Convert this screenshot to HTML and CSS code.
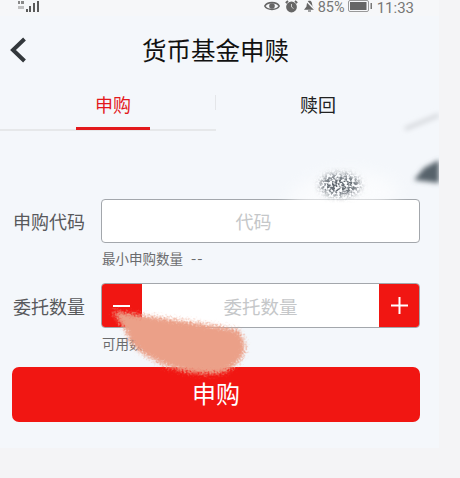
FILE: index.html
```html
<!DOCTYPE html>
<html lang="zh">
<head>
<meta charset="utf-8">
<title>货币基金申赎</title>
<link rel="stylesheet" href="styles.css">
</head>
<body>
<div class="app">
  <div class="status">
    <svg class="signal" width="22" height="12" viewBox="0 0 22 12">
      <g fill="#888"><rect x="0" y="1" width="2" height="3"/><rect x="3" y="1" width="3" height="3"/><rect x="0" y="6" width="6" height="3" opacity=".5"/></g>
      <g fill="#5a5a5a"><rect x="8" y="9" width="2" height="3"/><rect x="11" y="6" width="2" height="6"/><rect x="15" y="3" width="2" height="9"/><rect x="19" y="1" width="2" height="11"/></g>
    </svg>
    <div class="status-right">
      <svg width="16" height="12" viewBox="0 0 16 12"><path d="M0.800 6C3 1.500 13 1.500 15.200 6C13 10.500 3 10.500 0.800 6Z" fill="none" stroke="#666" stroke-width="1.600"/><circle cx="8" cy="6" r="2.800" fill="#666"/></svg>
      <svg class="ic-alarm" width="13" height="13" viewBox="0 0 13 13"><circle cx="6.500" cy="7" r="5.400" fill="#666"/><path d="M.8 3L3 1M12.200 3L10 1" stroke="#666" stroke-width="1.800"/><path d="M6.500 4V7L8.500 8.500" stroke="#ccc" fill="none"/></svg>
      <svg class="ic-bell" width="13" height="12" viewBox="0 0 13 12"><path d="M6.500 .8C4 .8 4 3.500 3.500 6.500L1 9.800H12L9.500 6.500C9 3.500 9 .8 6.500 .8Z" fill="#666"/><path d="M5 11H8" stroke="#666" stroke-width="1.200"/><path d="M2.500 0L12.500 10.500" stroke="#f6f7f9" stroke-width="1.500"/></svg>
      <span class="pct">85%</span>
      <svg class="ic-batt" width="25" height="12" viewBox="0 0 25 12"><rect x=".5" y=".5" width="20" height="11" rx="1.500" fill="none" stroke="#999"/><rect x="2" y="2" width="16.500" height="8" fill="#666"/><rect x="22.500" y="3" width="1.500" height="6" fill="#777"/></svg>
      <span class="time">11:33</span>
    </div>
  </div>

  <header class="title-bar">
    <svg class="back" width="18" height="26" viewBox="0 0 18 26"><path d="M15.500 2L4 13L15.500 24" fill="none" stroke="#33383c" stroke-width="4"/></svg>
    <h1 class="title">货币基金申赎</h1>
  </header>

  <nav class="tabs">
    <div class="tab active"><span>申购</span></div>
    <div class="tab tab-redeem"><span>赎回</span></div>
  </nav>

  <main class="form">
    <div class="row">
      <label class="label">申购代码</label>
      <div class="field field-code"><span class="placeholder">代码</span></div>
    </div>
    <p class="hint">最小申购数量<span class="dash">--</span></p>
    <div class="row row-qty">
      <label class="label">委托数量</label>
      <div class="field stepper">
        <span class="step"><svg width="17" height="2" viewBox="0 0 17 2"><rect width="17" height="2" fill="#fff"/></svg></span>
        <span class="placeholder">委托数量</span>
        <span class="step"><svg width="17" height="17" viewBox="0 0 17 17"><path d="M0 8.500H17M8.500 0V17" stroke="#fff" stroke-width="2"/></svg></span>
      </div>
    </div>
    <p class="hint hint-avail">可用数量</p>
    <button class="submit">申购</button>
  </main>

  <svg class="smudge" width="439" height="448" viewBox="0 0 439 448">
    <defs>
      <filter id="glow" x="-30%" y="-30%" width="160%" height="160%"><feGaussianBlur stdDeviation="8"/></filter>
      <filter id="soft" x="-30%" y="-60%" width="160%" height="220%"><feGaussianBlur stdDeviation="2.500"/></filter>
      <filter id="ink" x="-30%" y="-30%" width="160%" height="160%">
        <feGaussianBlur in="SourceGraphic" stdDeviation="3.500" result="s"/>
        <feTurbulence type="fractalNoise" baseFrequency=".4" numOctaves="2" seed="4" result="n"/>
        <feColorMatrix in="n" type="matrix" values="0 0 0 0 0  0 0 0 0 0  0 0 0 0 0  0 0 0 4 -1.500" result="m"/>
        <feComposite in="s" in2="m" operator="in"/>
        <feGaussianBlur stdDeviation=".6"/>
      </filter>
      <filter id="paint" x="-15%" y="-15%" width="130%" height="130%">
        <feGaussianBlur in="SourceGraphic" stdDeviation="2" result="s"/>
        <feTurbulence type="fractalNoise" baseFrequency=".5" numOctaves="3" seed="9" result="n"/>
        <feDisplacementMap in="s" in2="n" scale="9" xChannelSelector="R" yChannelSelector="G"/>
        <feGaussianBlur stdDeviation=".5"/>
      </filter>
    </defs>
    <path d="M285 205C300 165 380 160 400 190C395 215 330 225 285 205Z" fill="#fff" opacity=".6" filter="url(#glow)"/>
    <ellipse cx="340" cy="185" rx="20" ry="11" fill="#646b72" filter="url(#ink)"/>
    <path d="M439 160L424 168L414 180L439 183Z" fill="#56626b" filter="url(#soft)"/>
    <path d="M439 115L405 129" stroke="#d3d6da" stroke-width="4" filter="url(#soft)"/>
    <path d="M113 311C140 316 190 320 238 330C250 345 247 360 225 372C200 377 170 370 150 358C135 350 128 340 125 330C120 323 116 317 113 311Z" fill="#eba088" filter="url(#paint)"/>
  </svg>
</div>
</body>
</html>
```
FILE: styles.css
```css
* { box-sizing: border-box; }
html, body { margin: 0; height: 100%; }
body {
  background: #f4f4f6;
  font-family: "Noto Sans CJK SC", "Liberation Sans", sans-serif;
  overflow: hidden;
}
.app {
  position: relative;
  width: 439px;
  height: 448px;
  background: #f4f7fb;
}
.status {
  height: 16px;
  display: flex;
  justify-content: space-between;
  align-items: center;
  padding: 0 25px 0 18px;
  background: #f6f7f9;
}
.status svg { margin-bottom: 4px; }
.signal { display: block; }
.status-right {
  display: flex;
  align-items: center;
  color: #777;
  font-family: Roboto, "Liberation Sans", sans-serif;
  font-size: 14.500px;
  line-height: 16px;
}
.ic-alarm { margin-left: 5px; }
.ic-bell { margin-left: 5px; }
.pct { margin-left: 2px; }
.ic-batt { margin-left: 3px; }
.time { margin-left: 4px; font-size: 15px; }
.title-bar {
  position: relative;
  height: 59px;
  display: flex;
  align-items: center;
  justify-content: center;
  padding-right: 8px;
}
.back { position: absolute; left: 9px; top: 21px; }
.title {
  margin: 0;
  font-size: 24.500px;
  font-weight: 400;
  line-height: 30px;
  color: #111;
  padding-top: 8px;
}
.tabs {
  display: flex;
  height: 56px;
}
.tab {
  position: relative;
  width: 216px;
  display: flex;
  justify-content: center;
  padding: 17px 0 0 10px;
  font-size: 18px;
  line-height: 24px;
  color: #222;
  border-bottom: 2px solid transparent;
}
.tab-redeem { width: 204px; padding-left: 0; }
.tab.active {
  color: #e3191c;
  border-bottom-color: #e6e8ea;
}
.tab.active::before {
  content: "";
  position: absolute;
  right: 0;
  top: 20px;
  height: 15px;
  border-right: 1px solid #e4e6e9;
}
.tab.active::after {
  content: "";
  position: absolute;
  left: 76px;
  width: 74px;
  bottom: -1px;
  height: 3px;
  background: #e3191c;
}
.form {
  display: flex;
  flex-direction: column;
  padding: 68px 19px 0 12px;
}
.row { display: flex; align-items: center; }
.label {
  width: 89px;
  padding-left: 1px;
  font-size: 18px;
  color: #58595b;
  white-space: nowrap;
}
.field {
  flex: 1;
  height: 45px;
  display: flex;
  align-items: center;
  justify-content: center;
  background: #fff;
  border: 1px solid #a3a7ac;
  border-radius: 4px;
}
.field-code { height: 44px; padding-right: 14px; }
.placeholder { font-size: 18px; color: #c5c7c9; }
.stepper .placeholder { font-size: 18.500px; }
.hint {
  margin: 5px 0 0 90px;
  font-size: 13.500px;
  line-height: 21px;
  color: #6a6b6d;
}
.dash {
  margin-left: 8px;
  font-size: 15px;
  line-height: 1;
  letter-spacing: 1px;
}
.row-qty { margin-top: 14px; }
.stepper {
  overflow: hidden;
  justify-content: space-between;
}
.step {
  width: 41px;
  height: 45px;
  margin: -1px;
  display: flex;
  align-items: center;
  justify-content: center;
  background: #f11612;
}
.step svg { display: block; }
.hint-avail { margin-top: 5px; }
.submit {
  margin-top: 13px;
  height: 55px;
  padding: 0 0 4px;
  border: 0;
  border-radius: 7px;
  background: #f11612;
  color: #fff;
  font: inherit;
  font-size: 24px;
}
.smudge {
  position: absolute;
  left: 0;
  top: 0;
  pointer-events: none;
}
```
